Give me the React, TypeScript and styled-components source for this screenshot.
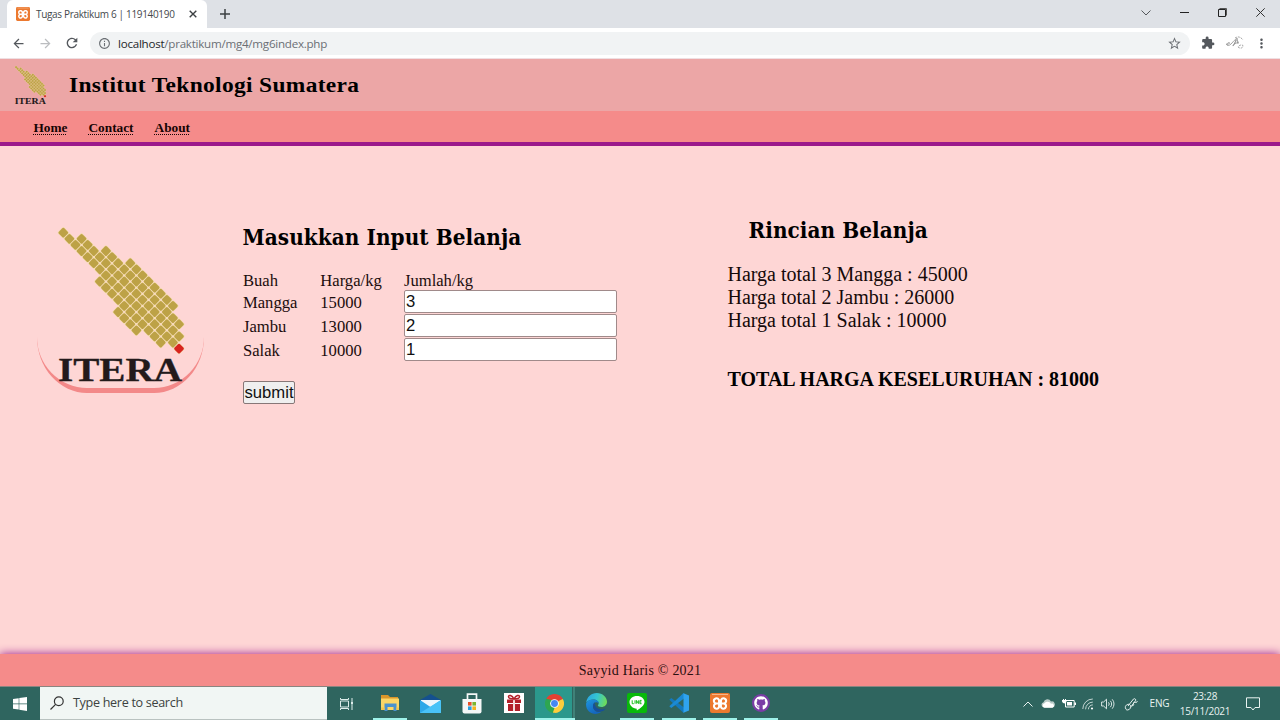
import React from "react";
import styled, { createGlobalStyle, css } from "styled-components";
import {
  MdArrowBack,
  MdArrowForward,
  MdRefresh,
  MdInfoOutline,
  MdStarBorder,
  MdExtension,
  MdMoreVert,
} from "react-icons/md";
import { FaGithub } from "react-icons/fa";

const ui = `"Open Sans", "Noto Sans", sans-serif`;
const serif = `"Liberation Serif", "Times New Roman", serif`;
const headingSerif = `"DejaVu Serif Condensed", "DejaVu Serif", Cambria, serif`;

const GlobalStyle = createGlobalStyle`
  * { box-sizing: border-box; }
  html, body { margin: 0; padding: 0; overflow: hidden; }
  svg { display: block; flex: none; }
`;

const Screen = styled.div`
  width: 1280px;
  height: 720px;
  display: flex;
  flex-direction: column;
  overflow: hidden;
  background: #fed6d5;
  color: #000;
`;

/* ---------- browser ---------- */

const TabStrip = styled.div`
  height: 28px;
  flex: none;
  display: flex;
  background: #dee1e6;
  padding-left: 7px;
`;

const Tab = styled.div`
  width: 200px;
  height: 28px;
  display: flex;
  align-items: center;
  padding: 0 9px;
  background: #fff;
  border-radius: 6px 6px 0 0;
  font: 10px/28px ${ui};
  color: #45494d;
`;

const TabTitle = styled.span`
  margin-left: 6px;
  width: 153px;
  white-space: nowrap;
  letter-spacing: -0.33px;
`;

const NewTab = styled.div`
  display: flex;
  align-items: center;
  padding-left: 12px;
`;

const WindowButtons = styled.div`
  margin-left: auto;
  display: flex;
  align-items: center;
  height: 25px;
`;

const WindowButton = styled.span`
  width: 38.2px;
  display: flex;
  justify-content: center;
`;

const Toolbar = styled.div`
  height: 31px;
  flex: none;
  display: flex;
  align-items: center;
  padding: 0 11px;
  background: #fff;
  color: #54585d;
  border-bottom: 1px solid #efdfe2;
`;

const ToolButton = styled.span<{ $w: number; $indent?: number; $dim?: boolean }>`
  width: ${(p) => p.$w}px;
  padding-left: ${(p) => p.$indent ?? 0}px;
  flex: none;
  display: flex;
  color: ${(p) => (p.$dim ? "#bbbdc0" : "inherit")};
`;

const AddressBar = styled.div`
  width: 1100px;
  height: 23px;
  flex: none;
  display: flex;
  align-items: center;
  padding: 0 8px;
  border-radius: 12px;
  background: #f1f3f4;
  font: 11.6px/23px ${ui};
  color: #6b6f74;
`;

const Url = styled.span`
  margin-left: 7px;
  flex: 1;
  letter-spacing: -0.25px;
  b {
    font-weight: 400;
    color: #25272a;
  }
`;

/* ---------- site ---------- */

const SiteHeader = styled.header`
  height: 52px;
  flex: none;
  display: flex;
  align-items: center;
  padding-left: 14px;
  background: #eca6a6;
`;

const SiteTitle = styled.h1`
  margin: 0 0 0 22px;
  font: bold 21.3px/52px ${serif};
  letter-spacing: 0.31px;
  white-space: nowrap;
  transform: scaleX(1.1);
  transform-origin: left;
`;

const Nav = styled.nav`
  height: 35px;
  flex: none;
  display: flex;
  gap: 21px;
  padding-left: 33.5px;
  background: #f58b8a;
  border-bottom: 4px solid #9b198b;
`;

const NavLink = styled.a`
  font: bold 13.3px/33px ${serif};
  color: #150404;
  text-decoration: underline dotted 1px;
  text-underline-offset: 2px;
`;

const Main = styled.main`
  flex: 1;
  display: flex;
  align-items: flex-start;
  padding-left: 37px;
`;

const LogoBadge = styled.div`
  width: 167px;
  height: 180px;
  flex: none;
  margin: 67px 39px 0 0;
  border-bottom: 5px solid #f38989;
  border-radius: 50px / 56px;
  display: flex;
  padding: 11px 0 0 18px;
`;

const FormPanel = styled.form`
  width: 485px;
  flex: none;
  padding-top: 76px;
`;

const Heading = styled.h2<{ $indent?: boolean }>`
  margin: 0 0 18px ${(p) => (p.$indent ? 21 : -0.5)}px;
  font: bold 22.3px/30px ${headingSerif};
  letter-spacing: 0.06px;
  white-space: nowrap;
`;

const PriceGrid = styled.div`
  display: grid;
  grid-template-columns: 77.3px 83.7px 213px;
  grid-template-rows: 20px repeat(3, 24px);
  font: 16.6px/25px ${serif};
  color: #1c0d0d;
  & > *:nth-child(-n + 3) {
    line-height: 21px;
  }
`;

const QuantityInput = styled.input`
  width: 213px;
  height: 23px;
  margin: 0;
  padding: 0 1px;
  border: 1px solid #a08a8a;
  border-radius: 2px;
  background: #fff;
  font: 16.67px "Liberation Sans", Arial, sans-serif;
  color: #111;
  outline: none;
`;

const SubmitButton = styled.button`
  display: block;
  width: 52px;
  height: 23px;
  margin-top: 19px;
  padding: 0;
  border: 1px solid #877777;
  border-radius: 2px;
  background: #efefef;
  font: 16.67px/21px "Liberation Sans", Arial, sans-serif;
  color: #111;
`;

const Summary = styled.section`
  padding-top: 69px;
  margin-left: -0.5px;
  font: 20px/22.8px ${serif};
  white-space: nowrap;
`;

const SummaryLine = styled.div`
  color: #150909;
`;

const Total = styled.div`
  margin-top: 37px;
  font-weight: bold;
`;

const Footer = styled.footer`
  height: 32px;
  flex: none;
  background: #f58b8a;
  box-shadow: 0 0 10px #9b198b;
  text-align: center;
  font: 14px/34px ${serif};
  letter-spacing: 0.22px;
  color: #2b0f0f;
`;

/* ---------- taskbar ---------- */

const Taskbar = styled.div`
  height: 34px;
  flex: none;
  display: flex;
  background: #2f655f;
  border-top: 1px solid #8a8580;
  color: #e9f3f1;
`;

const StartButton = styled.div`
  width: 40px;
  display: flex;
  align-items: center;
  justify-content: center;
`;

const SearchBox = styled.div`
  width: 287px;
  display: flex;
  align-items: center;
  gap: 9px;
  padding-left: 10px;
  background: #f1f6f4;
  border-bottom: 1px solid #b9c2c0;
  font: 12.6px/32px ${ui};
  color: #3c4241;
  letter-spacing: -0.32px;
`;

const TaskView = styled.div`
  width: 42px;
  display: flex;
  align-items: center;
  padding-left: 12px;
`;

const TaskItem = styled.div<{ $running?: boolean; $active?: boolean }>`
  width: 41.3px;
  display: flex;
  align-items: center;
  justify-content: center;
  border-bottom: 2px solid transparent;
  padding-top: 1px;
  ${(p) =>
    p.$running &&
    css`
      background: linear-gradient(#9ff2ea, #9ff2ea) 3.7px 100% / 34px 2px no-repeat border-box;
    `}
  ${(p) =>
    p.$active &&
    css`
      background: linear-gradient(#9ff2ea, #9ff2ea) 0.8px 100% / 40px 2px no-repeat border-box,
        linear-gradient(90deg, transparent 0.8px, #2b988c 0.8px 38px, #2f655f 38px 39px, #408279 39px 41px, transparent 41px)
          border-box;
    `}
`;

const Tray = styled.div`
  margin-left: auto;
  display: flex;
  align-items: center;
  font: 10px/15px ${ui};
`;

const TrayIcon = styled.span<{ $w: number }>`
  width: ${(p) => p.$w}px;
  display: flex;
  justify-content: center;
`;

const Language = styled.span`
  width: 29px;
  margin-right: 3px;
  text-align: center;
  letter-spacing: -0.2px;
`;

const Clock = styled.div`
  width: 56px;
  text-align: center;
  white-space: nowrap;
  letter-spacing: -0.25px;
`;

/* Column range of the diamonds in each row of the emblem: [first, last]. */
const spans: [number, number][] = [
  [0, 0],
  [1, 3],
  [2, 4],
  [3, 7],
  [4, 8],
  [5, 11],
  [6, 12],
  [7, 13],
  [6, 14],
  [7, 15],
  [8, 16],
  [9, 17],
  [10, 18],
  [9, 17],
  [10, 18],
  [11, 19],
  [12, 18],
  [15, 19],
  [16, 18],
  [19, 19],
];

const tiles = spans.flatMap(([from, to], row) => {
  const cells: { x: number; y: number; last: boolean }[] = [];
  for (let col = from; col <= to; col += 2) {
    cells.push({ x: 8.3 + col * 6.09, y: 8.7 + row * 6.1, last: row === spans.length - 1 });
  }
  return cells;
});

const IteraLogo = ({ width, height }: { width: number; height: number }) => (
  <svg width={width} height={height} viewBox="0 0 132 164" preserveAspectRatio="none">
    {tiles.map(({ x, y }) => (
      <rect
        key={`${x}-${y}`}
        x={x - 4.4}
        y={y - 4.4}
        width="8.8"
        height="8.8"
        rx="1.5"
        transform={`rotate(45 ${x} ${y})`}
        fill="#f3dcae"
      />
    ))}
    {tiles.map(({ x, y, last }) => (
      <rect
        key={`${x}-${y}`}
        x={x - 3.85}
        y={y - 3.85}
        width="7.7"
        height="7.7"
        rx="1.5"
        transform={`rotate(45 ${x} ${y})`}
        fill={last ? "#d8231f" : "#bda246"}
      />
    ))}
    <text
      x="3"
      y="157"
      textLength="124"
      lengthAdjust="spacingAndGlyphs"
      fontFamily="Liberation Serif, serif"
      fontWeight="bold"
      fontSize="34.5"
      fill="#231a1b"
      stroke="#231a1b"
      strokeWidth="0.3"
    >
      ITERA
    </text>
  </svg>
);

const XamppIcon = ({ size }: { size: number }) => (
  <svg width={size} height={size} viewBox="0 0 20 20">
    <rect width="20" height="20" rx="2" fill="#ec792f" />
    <path d="M2 1.500h16" stroke="#f6c4a2" strokeWidth="0.800" />
    <path
      d="M8.200 10.500H6.600a2.600 2.600 0 1 1 2.200-3.800c.3.600.3 1.300.3 2v3.800a2.600 2.600 0 1 1-2.500-2M11.800 10.500h1.600a2.600 2.600 0 1 0-2.200-3.800c-.3.600-.3 1.300-.3 2v3.800a2.600 2.600 0 1 0 2.500-2M8 10.500h4"
      fill="none"
      stroke="#fff"
      strokeWidth="2.100"
    />
  </svg>
);

const FolderIcon = () => (
  <svg width="20" height="18" viewBox="0 0 20 18">
    <path d="M1 1h7l2 2h8v12H1z" fill="#d9962a" />
    <path d="M1 4.5h18V16H1z" fill="#fbd667" />
    <path d="M4.500 17V9.500h12V17h-3v-4h-6v4z" fill="#4a92cf" />
    <path d="M1 13.500h3.500V16H1zM16.500 13.500H19V16h-2.500z" fill="#f3c64e" />
  </svg>
);

const MailIcon = () => (
  <svg width="21" height="19" viewBox="0 0 21 19">
    <path d="M0 6L10.500 0 21 6v4H0z" fill="#14508f" />
    <path d="M1 6h19v7H1z" fill="#eef6fb" />
    <path d="M0 6l10.500 7L21 6v13H0z" fill="#2da8e8" />
    <path d="M0 19L21 6v13z" fill="#49c3f7" />
  </svg>
);

const StoreIcon = () => (
  <svg width="20" height="21" viewBox="0 0 20 21">
    <path d="M5.500 7V1.200h9V7" fill="none" stroke="#f5f7f7" strokeWidth="1.700" />
    <path d="M.5 6h19v12.500a2 2 0 0 1-2 2h-15a2 2 0 0 1-2-2z" fill="#f5f7f7" />
    <path d="M6 9h3.600v3.600H6z" fill="#e8502a" />
    <path d="M10.400 9H14v3.600h-3.600z" fill="#7cb62d" />
    <path d="M6 13.400h3.600V17H6z" fill="#2a9fe0" />
    <path d="M10.400 13.400H14V17h-3.600z" fill="#f5b51e" />
  </svg>
);

const GiftIcon = () => (
  <svg width="20" height="20" viewBox="0 0 20 20">
    <path d="M0 0h20v20H0z" fill="#fff" />
    <path d="M3 6.500h6v3.500H3zM11 6.500h6v3.500h-6zM4 11h5v7H4zM11 11h5v7h-5z" fill="#b3202a" />
    <path d="M9 6.500h2V18H9z" fill="#f4dada" />
    <path
      d="M10 6C8 2 4.500 1.500 4.500 3.800 4.500 5.500 7 6 10 6s5.500-.5 5.500-2.200C15.500 1.500 12 2 10 6z"
      fill="none"
      stroke="#b3202a"
      strokeWidth="1.500"
    />
  </svg>
);

const ChromeIcon = () => (
  <svg width="19" height="19" viewBox="0 0 48 48">
    <path d="M24 24L3.200 12A24 24 0 0 1 44.800 12z" fill="#e34133" />
    <path d="M24 24L44.800 12A24 24 0 0 1 24 48z" fill="#fdcd3c" />
    <path d="M24 24L24 48A24 24 0 0 1 3.200 12z" fill="#2ea650" />
    <path d="M24 13H44.800L42 9H20z" fill="#e34133" />
    <path d="M33.500 29.500L24 48l-4-1 5-14z" fill="#fdcd3c" />
    <path d="M3.200 12L14.500 29.500 20 16z" fill="#2ea650" />
    <circle cx="24" cy="24" r="11" fill="#fff" />
    <circle cx="24" cy="24" r="8.700" fill="#4688f1" />
  </svg>
);

const EdgeIcon = () => (
  <svg width="21" height="21" viewBox="0 0 24 24">
    <defs>
      <linearGradient id="edgeTop" x1="0" y1="0.3" x2="1" y2="0.5">
        <stop offset="0" stopColor="#2aa5e4" />
        <stop offset="0.5" stopColor="#35c6d0" />
        <stop offset="1" stopColor="#6fdc58" />
      </linearGradient>
      <linearGradient id="edgeBody" x1="0" y1="0" x2="0.6" y2="1">
        <stop offset="0" stopColor="#1e96df" />
        <stop offset="1" stopColor="#1464bd" />
      </linearGradient>
    </defs>
    <path
      d="M.2 11C1 4.500 6 0 12.300 0 19 0 24 4.800 24 10c0 3.600-2.800 6-6.200 6-2.700 0-4.300-.8-4.300-1.700 0-.6 1-1 1-2.600C14.500 9.500 12 7.400 8.500 7.400 4.500 7.400 1.500 9 .2 11z"
      fill="url(#edgeTop)"
    />
    <path
      d="M.1 12C1 9 4.500 7.400 8.500 7.400c3.500 0 6 2.100 6 4.300-3-2.500-6.500-.3-6.500 3.300 0 5 5 7.500 9.500 6.500C11 27-.8 22.500.1 12z"
      fill="url(#edgeBody)"
    />
    <path
      d="M10 10.700C8.700 11.700 8 13.300 8 15c0 5 5.500 7.800 11 5.700 1.300-.5 2.500-1.600 3.200-2.800C16 20.500 9 17 10 10.700z"
      fill="#164f9c"
    />
  </svg>
);

const LineIcon = () => (
  <svg width="20" height="20" viewBox="0 0 20 20">
    <rect width="20" height="20" rx="2" fill="#08b90a" />
    <path
      d="M10 3c4.300 0 7.500 2.700 7.500 6 0 3.500-4.500 6.500-7.300 8.300-.6.300-.5-.5-.4-1.500C5.700 15.500 2.500 12.500 2.500 9c0-3.300 3.200-6 7.500-6z"
      fill="#fff"
    />
    <path
      d="M5.200 7.300v3.400h1.600M8 7.300v3.400M9.400 10.700V7.400l2 3.200V7.300M14.600 7.400h-1.700v3.300h1.700M12.900 9h1.500"
      fill="none"
      stroke="#08b90a"
      strokeWidth="0.900"
    />
  </svg>
);

const VsCodeIcon = () => (
  <svg width="20" height="20" viewBox="0 0 20 20">
    <path d="M.3 6.800L2.300 5 15 14.500V20L13.800 19.300z" fill="#1379bd" />
    <path d="M.3 13.200L2.300 15 15 5.500V0L13.800.7z" fill="#1b8ad3" />
    <path d="M14.500.300L20 2.600v14.800l-5.500 2.400z" fill="#2fa3ee" />
  </svg>
);

const GithubDisc = styled.span`
  width: 18px;
  height: 18px;
  display: flex;
  align-items: center;
  justify-content: center;
  border-radius: 50%;
  background: #7a3da6;
  color: #fff;
`;

const fruits = [
  { name: "Mangga", price: 15000, qty: 3 },
  { name: "Jambu", price: 13000, qty: 2 },
  { name: "Salak", price: 10000, qty: 1 },
];

export default function App() {
  const total = fruits.reduce((sum, f) => sum + f.price * f.qty, 0);
  return (
    <Screen>
      <GlobalStyle />
      <TabStrip>
        <Tab>
          <XamppIcon size={14} />
          <TabTitle>Tugas Praktikum 6 | 119140190</TabTitle>
          <svg width="8" height="8" viewBox="0 0 8 8" stroke="#3c4043" strokeWidth="1.400">
            <path d="M.7.7l6.600 6.600M7.300.7L.7 7.300" />
          </svg>
        </Tab>
        <NewTab>
          <svg width="12" height="12" viewBox="0 0 12 12" stroke="#3c4043" strokeWidth="1.500">
            <path d="M6 1v10M1 6h10" />
          </svg>
        </NewTab>
        <WindowButtons>
          <WindowButton>
            <svg width="10" height="6" viewBox="0 0 10 6" fill="none" stroke="#55585c">
              <path d="M.5.500L5 5 9.500.500" />
            </svg>
          </WindowButton>
          <WindowButton>
            <svg width="9" height="9" viewBox="0 0 9 9" stroke="#222">
              <path d="M0 4.500h9" />
            </svg>
          </WindowButton>
          <WindowButton>
            <svg width="9" height="9" viewBox="0 0 9 9" fill="none" stroke="#222">
              <path d="M.5 1.500h7v7h-7z" />
              <path d="M1.500.500h7v7" stroke="#555" />
            </svg>
          </WindowButton>
          <WindowButton>
            <svg width="9" height="9" viewBox="0 0 9 9" stroke="#333">
              <path d="M.3.300l8.400 8.400M8.700.300L.3 8.700" />
            </svg>
          </WindowButton>
        </WindowButtons>
      </TabStrip>

      <Toolbar>
        <ToolButton $w={27}>
          <MdArrowBack size={15} />
        </ToolButton>
        <ToolButton $w={26} $dim>
          <MdArrowForward size={15} />
        </ToolButton>
        <ToolButton $w={26}>
          <MdRefresh size={16} />
        </ToolButton>
        <AddressBar>
          <MdInfoOutline size={13} />
          <Url>
            <b>localhost</b>/praktikum/mg4/mg6index.php
          </Url>
          <MdStarBorder size={15} />
        </AddressBar>
        <ToolButton $w={35} $indent={11}>
          <MdExtension size={14} />
        </ToolButton>
        <ToolButton $w={29}>
          <svg width="20" height="14" viewBox="0 0 20 14" fill="none" stroke="#8b8b8b" strokeWidth="0.800">
            <path d="M1 8c3 2 5-3 2-1s0 4 3 1 4-5 5-4-4 6-3 6 3-7 4-8l1 6M9 8l5-2" />
            <path d="M13 11c2 2 5 1 5-1s-4-1-5 1M10 2c3-2 6-1 8 2" strokeDasharray="2 1" />
          </svg>
        </ToolButton>
        <ToolButton $w={16}>
          <MdMoreVert size={15} />
        </ToolButton>
      </Toolbar>

      <SiteHeader>
        <IteraLogo width={33} height={41} />
        <SiteTitle>Institut Teknologi Sumatera</SiteTitle>
      </SiteHeader>
      <Nav>
        <NavLink>Home</NavLink>
        <NavLink>Contact</NavLink>
        <NavLink>About</NavLink>
      </Nav>

      <Main>
        <LogoBadge>
          <IteraLogo width={132} height={164} />
        </LogoBadge>
        <FormPanel onSubmit={(e) => e.preventDefault()}>
          <Heading>Masukkan Input Belanja</Heading>
          <PriceGrid>
            <span>Buah</span>
            <span>Harga/kg</span>
            <span>Jumlah/kg</span>
            {fruits.map((f) => (
              <React.Fragment key={f.name}>
                <span>{f.name}</span>
                <span>{f.price}</span>
                <QuantityInput defaultValue={f.qty} />
              </React.Fragment>
            ))}
          </PriceGrid>
          <SubmitButton>submit</SubmitButton>
        </FormPanel>
        <Summary>
          <Heading $indent>Rincian Belanja</Heading>
          {fruits.map((f) => (
            <SummaryLine key={f.name}>
              Harga total {f.qty} {f.name} : {f.price * f.qty}
            </SummaryLine>
          ))}
          <Total>TOTAL HARGA KESELURUHAN : {total}</Total>
        </Summary>
      </Main>

      <Footer>Sayyid Haris © 2021</Footer>

      <Taskbar>
        <StartButton>
          <svg width="14" height="14" viewBox="0 0 14 14" fill="#fff">
            <path d="M0 2l5.700-.8v5.400H0zM6.300 1.100L14 0v6.600H6.300zM0 7.200h5.700v5.400L0 11.800zM6.300 7.200H14V14l-7.700-1.200z" />
          </svg>
        </StartButton>
        <SearchBox>
          <svg width="14" height="14" viewBox="0 0 14 14" fill="none" stroke="#333" strokeWidth="1.200">
            <circle cx="8.800" cy="5.200" r="4.400" />
            <path d="M5.600 8.400L.5 13.500" />
          </svg>
          Type here to search
        </SearchBox>
        <TaskView>
          <svg width="16" height="14" viewBox="0 0 16 14" fill="none" stroke="#dcecea">
            <path d="M1.500 4h8v6h-8zM1.500 1v1.500h8V1M1.500 13v-1.500h8V13M13 1v12" />
            <path d="M12 5h2v2h-2z" fill="#dcecea" stroke="none" />
          </svg>
        </TaskView>
        <TaskItem $running>
          <FolderIcon />
        </TaskItem>
        <TaskItem>
          <MailIcon />
        </TaskItem>
        <TaskItem>
          <StoreIcon />
        </TaskItem>
        <TaskItem>
          <GiftIcon />
        </TaskItem>
        <TaskItem $active>
          <ChromeIcon />
        </TaskItem>
        <TaskItem>
          <EdgeIcon />
        </TaskItem>
        <TaskItem $running>
          <LineIcon />
        </TaskItem>
        <TaskItem $running>
          <VsCodeIcon />
        </TaskItem>
        <TaskItem $running>
          <XamppIcon size={20} />
        </TaskItem>
        <TaskItem $running>
          <GithubDisc>
            <FaGithub size={14} />
          </GithubDisc>
        </TaskItem>

        <Tray>
          <TrayIcon $w={18}>
            <svg width="10" height="6" viewBox="0 0 10 6" fill="none" stroke="#e9f3f1">
              <path d="M.5 5.500L5 1l4.500 4.500" />
            </svg>
          </TrayIcon>
          <TrayIcon $w={22}>
            <svg width="14" height="9" viewBox="0 0 14 9">
              <path d="M3 8.500A2.700 2.700 0 0 1 2.500 3.200 4 4 0 0 1 10 2.500a3 3 0 0 1 1.500 6z" fill="#b9cbc8" />
              <path d="M3.500 8.700a2.300 2.300 0 0 1 0-4.500A4 4 0 0 1 10 4.700a2.100 2.100 0 0 1 1.500 4z" fill="#fff" />
            </svg>
          </TrayIcon>
          <TrayIcon $w={19}>
            <svg width="14" height="9" viewBox="0 0 14 9">
              <path d="M3.500 1.500h8.700v6.500H3.500z" fill="none" stroke="#fff" />
              <path d="M5 3h5v3.500H5zM12.500 3.500H14v2.500h-1.500z" fill="#fff" />
              <path d="M0 1h1V0h1v1h1V0h1v1h.5v2L3 4.500 1 4 0 2.500z" fill="#fff" />
            </svg>
          </TrayIcon>
          <TrayIcon $w={20}>
            <svg width="12" height="12" viewBox="0 0 12 12" fill="none" stroke="#c3d5d2">
              <path d="M.8 11A10 10 0 0 1 10.800 1M3.600 11.300A7.200 7.200 0 0 1 10.800 4.100M6.400 11.300A4.400 4.400 0 0 1 10.800 6.900" />
              <circle cx="10" cy="10.500" r="1.100" fill="#fff" stroke="none" />
            </svg>
          </TrayIcon>
          <TrayIcon $w={19}>
            <svg width="14" height="12" viewBox="0 0 14 12" fill="none" stroke="#e9f3f1" strokeWidth="0.900">
              <path d="M.6 4h2L5.500 1.200v9.600L2.600 8h-2zM7.500 4.300a2.500 2.500 0 0 1 0 3.400M9.300 2.800a4.500 4.500 0 0 1 0 6.400M11.200 1.300a7 7 0 0 1 0 9.400" />
            </svg>
          </TrayIcon>
          <TrayIcon $w={28}>
            <svg width="14" height="14" viewBox="0 0 14 14" fill="none" stroke="#e9f3f1">
              <path d="M4 9l5.500-7c1-1 3 .500 2 1.800L6.300 10.500M1.500 11c-1-2 2-4.500 4-3.500s1.500 4-.5 5-3 .5-3.500-1.500zM8 8.500c1.500 1 2-1 1.500-2s1-1.500 2-1 1.500-.5 1.800-1.500" />
            </svg>
          </TrayIcon>
          <Language>ENG</Language>
          <Clock>
            <div>23:28</div>
            <div>15/11/2021</div>
          </Clock>
          <TrayIcon $w={39}>
            <svg width="14" height="14" viewBox="0 0 14 14" fill="none" stroke="#e9f3f1">
              <path d="M.5.800h13v9.700H9L7 13l-2-2.500H.5z" />
            </svg>
          </TrayIcon>
          <TrayIcon $w={8} />
        </Tray>
      </Taskbar>
    </Screen>
  );
}
